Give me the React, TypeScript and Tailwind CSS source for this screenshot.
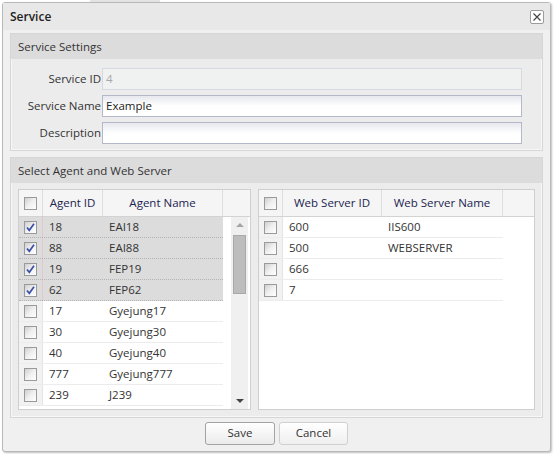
import React from "react";

type Agent = { id: string; name: string; checked: boolean };
type WebServer = { id: string; name: string };

const agents: Agent[] = [
  { id: "18", name: "EAI18", checked: true },
  { id: "88", name: "EAI88", checked: true },
  { id: "19", name: "FEP19", checked: true },
  { id: "62", name: "FEP62", checked: true },
  { id: "17", name: "Gyejung17", checked: false },
  { id: "30", name: "Gyejung30", checked: false },
  { id: "40", name: "Gyejung40", checked: false },
  { id: "777", name: "Gyejung777", checked: false },
  { id: "239", name: "J239", checked: false },
];

const webServers: WebServer[] = [
  { id: "600", name: "IIS600" },
  { id: "500", name: "WEBSERVER" },
  { id: "666", name: "" },
  { id: "7", name: "" },
];

function CheckBox({ checked = false }: { checked?: boolean }) {
  return (
    <div className="w-[13px] h-[13px] border border-[#9a9a9a] bg-gradient-to-br from-[#cfcfcf] via-[#f0f0f0] to-white flex items-center justify-center">
      {checked && (
        <svg width="11" height="11" viewBox="0 0 11 11">
          <path d="M2 5.5 L4.3 8.3 L9 1.8" stroke="#3b4fa8" strokeWidth="1.7" fill="none" />
        </svg>
      )}
    </div>
  );
}

function FieldRow({
  label,
  value,
  disabled,
}: {
  label: string;
  value: string;
  disabled?: boolean;
}) {
  return (
    <div className="flex items-center">
      <div className="w-[91px] text-right pr-[1px] whitespace-nowrap text-[#333]">{label}</div>
      <div
        className={`w-[420px] h-[22px] border flex items-center px-[3px] ${
          disabled
            ? "bg-[#f0f1f1] border-[#d8d8e2] text-[#a8a8a8]"
            : "bg-gradient-to-b from-[#e6e8ee] via-white to-white border-[#b5b8c8] text-[#222]"
        }`}
      >
        {value}
      </div>
    </div>
  );
}

function FieldSet({ title, children }: { title: string; children: React.ReactNode }) {
  return (
    <div className="border border-[#d6d6d6] bg-[#ececec] shadow-[inset_0_0_0_1px_#f7f7f7]">
      <div className="h-[25px] bg-[#dcdcdc] flex items-center px-[7px] text-[#333]">{title}</div>
      {children}
    </div>
  );
}

export default function App() {
  return (
    <div
      className="w-[554px] h-[454px] bg-white relative overflow-hidden text-[11.5px]"
      style={{ fontFamily: '"Open Sans", "Noto Sans", sans-serif' }}
    >
      {/* page behind the dialog */}
      <div className="absolute left-[90px] top-0 w-[70px] h-[3px] bg-[#e4e4e4]" />

      <div className="absolute left-[2px] top-[2px] w-[549px] h-[450px] border border-[#b9b9b9] rounded-[3px] bg-[#f0f0f0] shadow-[1px_1px_2px_rgba(0,0,0,0.25)] flex flex-col">
        {/* title bar */}
        <div className="h-[27px] bg-[#e8e8e8] flex items-center justify-between pl-[7px] pr-[6px]">
          <span className="text-[#222] font-semibold text-[12px]">Service</span>
          <div className="w-[14px] h-[14px] border border-[#9c9c9c] rounded-[2px] bg-white flex items-center justify-center">
            <svg width="10" height="10" viewBox="0 0 10 10">
              <path d="M1.5 1.5 L8.5 8.5 M8.5 1.5 L1.5 8.5" stroke="#444" strokeWidth="1.2" />
            </svg>
          </div>
        </div>

        <div className="flex flex-col px-[7px] pt-[3px] gap-[6px]">
          <FieldSet title="Service Settings">
            <div className="flex flex-col gap-[5px] pt-[9px] pb-[6px]">
              <FieldRow label="Service ID" value="4" disabled />
              <FieldRow label="Service Name" value="Example" />
              <FieldRow label="Description" value="" />
            </div>
          </FieldSet>

          <FieldSet title="Select Agent and Web Server">
            <div className="flex gap-[7px] px-[7px] pt-[6px] pb-[7px]">
              {/* agent grid */}
              <div className="w-[233px] h-[221px] border border-[#cfcfcf] bg-white flex flex-col">
                <div className="h-[27px] flex bg-[#f5f5f5] border-b border-[#d3d3d3] text-[#1c2451]">
                  <div className="w-[24px] flex items-center justify-center border-r border-[#dedede]">
                    <CheckBox />
                  </div>
                  <div className="w-[60px] flex items-center justify-center border-r border-[#dedede]">Agent ID</div>
                  <div className="w-[120px] flex items-center justify-center border-r border-[#dedede]">Agent Name</div>
                  <div className="flex-1" />
                </div>
                <div className="flex flex-1 overflow-hidden">
                  <div className="w-[204px] flex flex-col">
                    {agents.map((a) => (
                      <div
                        key={a.id}
                        className={`h-[21px] flex shrink-0 text-[#333] ${
                          a.checked
                            ? "bg-[#dcdcdc] border-b border-dotted border-[#b4b4b4]"
                            : "bg-white border-b border-[#ececec]"
                        }`}
                      >
                        <div
                          className={`w-[24px] flex items-center justify-center border-r ${
                            a.checked ? "border-[#e2c8c8]" : "bg-[#f2f2f2] border-[#e4e4e4]"
                          }`}
                        >
                          <CheckBox checked={a.checked} />
                        </div>
                        <div className="w-[60px] flex items-center pl-[6px]">{a.id}</div>
                        <div className="flex-1 flex items-center pl-[6px]">{a.name}</div>
                      </div>
                    ))}
                  </div>
                  <div className="w-[8px]" />
                  {/* scrollbar */}
                  <div className="w-[17px] bg-[#f0f0f0] flex flex-col items-center">
                    <div className="h-[16px] flex items-center justify-center">
                      <div className="w-0 h-0 border-l-[4px] border-r-[4px] border-b-[4px] border-l-transparent border-r-transparent border-b-[#a6a6a6]" />
                    </div>
                    <div className="w-[13px] h-[59px] mt-[2px] bg-[#bdbdbd] border border-[#a9a9a9]" />
                    <div className="flex-1" />
                    <div className="h-[16px] flex items-center justify-center">
                      <div className="w-0 h-0 border-l-[4px] border-r-[4px] border-t-[4px] border-l-transparent border-r-transparent border-t-[#444]" />
                    </div>
                  </div>
                </div>
              </div>

              {/* web server grid */}
              <div className="w-[277px] h-[221px] border border-[#cfcfcf] bg-white flex flex-col">
                <div className="h-[27px] flex bg-[#f5f5f5] border-b border-[#d3d3d3] text-[#1c2451]">
                  <div className="w-[24px] flex items-center justify-center border-r border-[#dedede]">
                    <CheckBox />
                  </div>
                  <div className="w-[99px] flex items-center justify-center border-r border-[#dedede]">Web Server ID</div>
                  <div className="w-[121px] flex items-center justify-center border-r border-[#dedede]">Web Server Name</div>
                  <div className="flex-1" />
                </div>
                <div className="w-[244px] flex flex-col">
                  {webServers.map((w) => (
                    <div key={w.id} className="h-[21px] flex shrink-0 text-[#333] border-b border-[#ececec]">
                      <div className="w-[24px] flex items-center justify-center bg-[#f2f2f2] border-r border-[#e4e4e4]">
                        <CheckBox />
                      </div>
                      <div className="w-[99px] flex items-center pl-[6px]">{w.id}</div>
                      <div className="flex-1 flex items-center pl-[6px]">{w.name}</div>
                    </div>
                  ))}
                </div>
              </div>
            </div>
          </FieldSet>
        </div>

        {/* footer buttons */}
        <div className="flex-1 flex items-center justify-center gap-[4px] pb-[3px]">
          <button className="w-[70px] h-[23px] border border-[#a3a3a3] rounded-[3px] bg-gradient-to-b from-white to-[#ebebeb] text-[#333]">
            Save
          </button>
          <button className="w-[69px] h-[23px] border border-[#d0d0d0] rounded-[3px] bg-gradient-to-b from-white to-[#efefef] text-[#333]">
            Cancel
          </button>
        </div>
      </div>
    </div>
  );
}
